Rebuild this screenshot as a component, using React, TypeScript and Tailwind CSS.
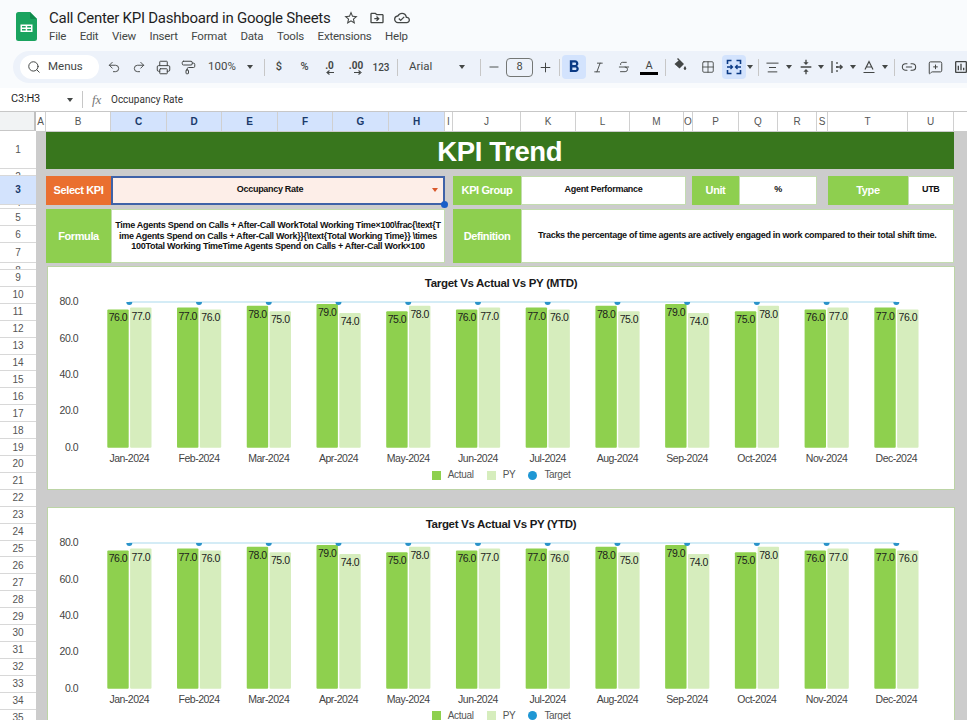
import React from 'react';
import {
  Search,
  Undo2,
  Redo2,
  Printer,
  PaintRoller,
  Minus,
  Plus,
  Italic,
  Strikethrough,
  Grid2x2,
  AlignCenter,
  Link2,
  MessageSquarePlus,
} from 'lucide-react';
import {
  MdStarBorder,
  MdOutlineDriveFileMove,
  MdOutlineCloudDone,
  MdFormatBold,
  MdVerticalAlignCenter,
  MdOutlineInsertChart,
} from 'react-icons/md';

const menus = ['File', 'Edit', 'View', 'Insert', 'Format', 'Data', 'Tools', 'Extensions', 'Help'];

const columns: [string, string, boolean][] = [
  ['A', 'w-[10px]', false],
  ['B', 'w-[65px]', false],
  ['C', 'w-[56px]', true],
  ['D', 'w-[55px]', true],
  ['E', 'w-[56px]', true],
  ['F', 'w-[55px]', true],
  ['G', 'w-[56px]', true],
  ['H', 'w-[56px]', true],
  ['I', 'w-[8px]', false],
  ['J', 'w-[68px]', false],
  ['K', 'w-[55px]', false],
  ['L', 'w-[54px]', false],
  ['M', 'w-[54px]', false],
  ['O', 'w-[9px]', false],
  ['P', 'w-[46px]', false],
  ['Q', 'w-[39px]', false],
  ['R', 'w-[39px]', false],
  ['S', 'w-[11px]', false],
  ['T', 'w-[80px]', false],
  ['U', 'w-[46px]', false],
];

const topRows: [number, string][] = [
  [1, 'h-[37.5px] items-center'],
  [2, 'h-[7px] items-start pt-[3px] leading-[10px]'],
  [3, 'h-[29px] items-center'],
  [4, 'h-[4.5px] items-end leading-[10px]'],
  [5, 'h-[17px] items-center'],
  [6, 'h-[17px] items-center'],
  [7, 'h-[20px] items-center'],
  [8, 'h-[7px] items-start pt-[3px] leading-[10px]'],
];
const restRows = Array.from({ length: 27 }, (_, i) => i + 9);

const months = ['Jan', 'Feb', 'Mar', 'Apr', 'May', 'Jun', 'Jul', 'Aug', 'Sep', 'Oct', 'Nov', 'Dec'];
const actual = [76, 77, 78, 79, 75, 76, 77, 78, 79, 75, 76, 77];
const py = [77, 76, 75, 74, 78, 77, 76, 75, 74, 78, 77, 76];

const Caret = ({ className = '' }: { className?: string }) => (
  <div className={`w-0 h-0 shrink-0 border-x-[3.5px] border-t-[4px] border-x-transparent border-t-[#444746] ${className}`} />
);

const Sep = ({ className = '' }: { className?: string }) => (
  <div className={`w-px h-[17px] bg-[#c7c7c7] shrink-0 ${className}`} />
);

const Tool = ({ children, className = 'w-[25px]' }: { children: React.ReactNode; className?: string }) => (
  <div className={`h-[24px] shrink-0 flex items-center justify-center text-[#444746] ${className}`}>{children}</div>
);

const Decimal = ({ label, right }: { label: string; right?: boolean }) => (
  <div className="relative flex flex-col items-center text-[10px] font-bold leading-[10px] text-[#444746] -mt-[3px]">
    {label}
    <svg width="9" height="5" viewBox="0 0 9 5" className="absolute -bottom-[4px] right-0">
      {right ? (
        <path d="M0 2.5h6M4.5 0.5L7 2.5L4.5 4.5" stroke="#444746" strokeWidth="1.1" fill="none" />
      ) : (
        <path d="M9 2.5H2M4.5 0.5L2 2.5L4.5 4.5" stroke="#444746" strokeWidth="1.1" fill="none" />
      )}
    </svg>
  </div>
);

const Toolbar = () => (
  <div className="ml-[13px] w-[954px] h-[32px] rounded-l-full bg-[#edf2fa] flex items-center pl-[7px] overflow-hidden font-[Roboto,sans-serif]">
    <div className="w-[79px] h-[24px] rounded-full bg-white flex items-center shrink-0 text-[#444746]">
      <Search size={14} strokeWidth={1.7} className="ml-[7px]" />
      <span className="ml-[7px] text-[11.5px]">Menus</span>
    </div>
    <Tool className="w-[25px] ml-[2px]"><Undo2 size={14} strokeWidth={1.6} /></Tool>
    <Tool><Redo2 size={14} strokeWidth={1.6} /></Tool>
    <Tool><Printer size={15} strokeWidth={1.6} /></Tool>
    <Tool className="w-[24px]"><PaintRoller size={15} strokeWidth={1.6} /></Tool>
    <Tool className="w-[58px] !justify-start pl-[8px] gap-[11px] text-[11.5px]">100%<Caret /></Tool>
    <Sep className="ml-[6px]" />
    <Tool className="w-[26px] ml-[1px] text-[11px] font-medium">$</Tool>
    <Tool className="w-[25px] text-[11px] font-medium">%</Tool>
    <Tool className="w-[25px]"><Decimal label=".0" /></Tool>
    <Tool className="w-[28px]"><Decimal label=".00" right /></Tool>
    <Tool className="w-[22px] text-[10px] font-medium">123</Tool>
    <Sep className="ml-[5px]" />
    <Tool className="w-[82px] !justify-start pl-[11px] gap-[27px] text-[11.5px]">Arial<Caret /></Tool>
    <Sep />
    <Tool className="w-[24px] ml-[1px]"><Minus size={14} strokeWidth={1.6} /></Tool>
    <div className="w-[27px] h-[19px] rounded-[4px] border border-[#747775] flex items-center justify-center shrink-0 text-[11px] text-[#444746]">8</div>
    <Tool className="w-[25px]"><Plus size={15} strokeWidth={1.6} /></Tool>
    <Sep className="ml-[1px]" />
    <Tool className="w-[24px] ml-[2px] rounded-[4px] bg-[#d3e3fd] !text-[#0b3a85]"><MdFormatBold className="text-[20px]" /></Tool>
    <Tool><Italic size={13} strokeWidth={1.7} /></Tool>
    <Tool><Strikethrough size={14} strokeWidth={1.6} /></Tool>
    <Tool className="w-[26px]">
      <div className="flex flex-col items-center">
        <span className="text-[11px] leading-[11px]">A</span>
        <div className="w-[18px] h-[3px] bg-black mt-[1px]" />
      </div>
    </Tool>
    <Sep className="ml-[3px]" />
    <Tool className="w-[28px]">
      <svg width="14" height="14" viewBox="0 0 14 14" className="-mt-[4px]">
        <path d="M4 1L5 0L11 6L6.5 10.5L1.5 6L5.6 2.6Z" fill="#444746" />
        <path d="M12 8C12.8 9.2 13.3 9.9 13.3 10.6A1.3 1.3 0 0 1 10.7 10.6C10.7 9.9 11.2 9.2 12 8Z" fill="#444746" />
      </svg>
    </Tool>
    <Tool className="w-[28px]"><Grid2x2 size={14} strokeWidth={1.5} /></Tool>
    <Tool className="w-[24px] rounded-[4px] bg-[#d3e3fd]">
      <svg width="16" height="16" viewBox="0 0 16 16" fill="none" stroke="#0b3a85" strokeWidth="1.6">
        <path d="M5.5 1.5H1.5V5M1.5 11V14.5H5.5M10.5 1.5H14.5V5M14.5 11V14.5H10.5" />
        <path d="M1 8H6M4.5 6L6.5 8L4.5 10M15 8H10M11.5 6L9.5 8L11.5 10" strokeWidth="1.3" />
      </svg>
    </Tool>
    <Tool className="w-[8px]"><Caret /></Tool>
    <Sep className="ml-[4px]" />
    <Tool className="w-[26px]"><AlignCenter size={15} strokeWidth={1.6} /></Tool>
    <Tool className="w-[8px]"><Caret /></Tool>
    <Tool className="w-[23px] ml-[1px]"><MdVerticalAlignCenter className="text-[16px]" /></Tool>
    <Tool className="w-[8px]"><Caret /></Tool>
    <Tool className="w-[24px]">
      <svg width="14" height="14" viewBox="0 0 14 14" fill="none" stroke="#444746" strokeWidth="1.3">
        <path d="M2 1v12M7 2v2M7 6v2M7 10v2M6 7h6M10 5l2.2 2L10 9" />
      </svg>
    </Tool>
    <Tool className="w-[8px]"><Caret /></Tool>
    <Tool className="w-[24px]">
      <svg width="14" height="14" viewBox="0 0 14 14" fill="none" stroke="#444746" strokeWidth="1.2">
        <path d="M3 9.5L7 1.5L11 9.5M4.5 7h5M1.5 12.5h11" />
      </svg>
    </Tool>
    <Tool className="w-[8px]"><Caret /></Tool>
    <Sep className="ml-[5px]" />
    <Tool className="w-[28px]"><Link2 size={16} strokeWidth={1.6} /></Tool>
    <Tool><MessageSquarePlus size={15} strokeWidth={1.6} /></Tool>
    <Tool><MdOutlineInsertChart className="text-[16px]" /></Tool>
  </div>
);

const Label = ({ className, children }: { className: string; children: React.ReactNode }) => (
  <div className={`shrink-0 h-full flex items-center justify-center text-white font-bold text-[11px] tracking-[-0.4px] ${className}`}>
    {children}
  </div>
);

const Value = ({ className, children }: { className: string; children: React.ReactNode }) => (
  <div className={`shrink-0 h-full bg-white border border-[#c3dcb0] flex items-center justify-center text-center text-[9px] tracking-[-0.3px] font-bold text-[#111] ${className}`}>
    {children}
  </div>
);

const BAR_Y0 = 181.7;
const SCALE = 1.82;
const barTop = (v: number) => BAR_Y0 - v * SCALE;

const Plot = () => (
  <svg width="907" height="200" viewBox="0 0 907 200" className="absolute -left-px -top-px tracking-[-0.5px]">
    {[0, 20, 40, 60, 80].map((v) => (
      <text key={v} x="31" y={barTop(v) + 3} textAnchor="end" className="text-[10.5px] fill-[#444]">
        {v}.0
      </text>
    ))}
    {months.map((m, i) => {
      const x = 60.3 + i * 69.73;
      return (
        <g key={m}>
          <rect x={x} y={barTop(actual[i])} width="21.4" height={actual[i] * SCALE} rx="1" fill="#8ed04e" />
          <rect x={x + 22.8} y={barTop(py[i])} width="21.4" height={py[i] * SCALE} rx="1" fill="#d6edbd" />
          <text x={x + 10.7} y={barTop(actual[i]) + 12} textAnchor="middle" className="text-[10.5px] fill-[#1c1c1c]">
            {actual[i]}.0
          </text>
          <text x={x + 33.5} y={barTop(py[i]) + 12} textAnchor="middle" className="text-[10.5px] fill-[#1c1c1c]">
            {py[i]}.0
          </text>
          <text x={x + 22} y="195.5" textAnchor="middle" className="text-[10.5px] fill-[#444]">
            {m}-2024
          </text>
        </g>
      );
    })}
    <path d="M82.3 36H849.3" stroke="#a9d9ee" strokeWidth="1.2" />
    {months.map((m, i) => {
      const cx = 82.3 + i * 69.73;
      return <path key={m} d={`M${cx - 3} 36a3 3 0 0 0 6 0z`} fill="#2a93c9" />;
    })}
  </svg>
);

const Chart = ({ title, className = '' }: { title: string; className?: string }) => (
  <div className={`relative ml-px w-[908px] h-[224px] shrink-0 bg-white border border-[#bcd4a6] flex flex-col items-center ${className}`}>
    <div className="relative z-10 mt-[8px] text-[11.5px] tracking-[-0.3px] leading-[16px] font-bold text-[#1a1a1a]">{title}</div>
    <Plot />
    <div className="absolute left-0 right-0 top-[202px] flex items-center justify-center text-[10px] tracking-[-0.3px] leading-[12px] text-[#555]">
      <div className="w-[9px] h-[9px] bg-[#8ed04e]" />
      <span className="ml-[7px]">Actual</span>
      <div className="w-[9px] h-[9px] bg-[#d6edbd] ml-[13px]" />
      <span className="ml-[7px]">PY</span>
      <div className="w-[9px] h-[9px] rounded-full bg-[#1f97d4] ml-[13px]" />
      <span className="ml-[7px]">Target</span>
    </div>
  </div>
);

const App = () => {
  return (
    <div className="w-[967px] h-[720px] overflow-hidden bg-white font-['Liberation_Sans',Arial,sans-serif]">
      {/* docs header */}
      <header className="h-[88px] bg-[#f9fbfd] flex flex-col">
        <div className="h-[51px] flex">
          <svg width="22" height="29" viewBox="0 0 22 29" className="ml-[16px] mt-[12px] shrink-0">
            <path d="M2.5 0H14L21 7V26.5A2.5 2.5 0 0 1 18.5 29H2.5A2.5 2.5 0 0 1 0 26.5V2.5A2.5 2.5 0 0 1 2.5 0Z" fill="#1aa35f" />
            <path d="M14 0L21 7H15.5A1.5 1.5 0 0 1 14 5.5Z" fill="#0f8a4c" />
            <path d="M4.5 12.5H16.5V20H4.5Z M6 14V15.5H9.7V14Z M11.2 14V15.5H15V14Z M6 17V18.5H9.7V17Z M11.2 17V18.5H15V17Z" fill="#fff" fillRule="evenodd" />
          </svg>
          <div className="ml-[11px] font-[Roboto,sans-serif]">
            <div className="flex items-center h-[24px] mt-[6px]">
              <span className="text-[15px] tracking-[-0.25px] leading-[24px] text-[#1f1f1f] whitespace-nowrap w-[294px]">Call Center KPI Dashboard in Google Sheets</span>
              <MdStarBorder className="text-[16px] text-[#444746]" />
              <MdOutlineDriveFileMove className="text-[16px] text-[#444746] ml-[10px]" />
              <MdOutlineCloudDone className="text-[16px] text-[#444746] ml-[9px]" />
            </div>
            <nav className="flex gap-[13.5px] -mt-px text-[11.5px] tracking-[-0.2px] leading-[14px] text-[#444746]">
              {menus.map((m) => (
                <span key={m}>{m}</span>
              ))}
            </nav>
          </div>
        </div>
        <Toolbar />
      </header>

      {/* formula bar */}
      <div className="h-[24px] bg-white flex items-center border-b border-[#c7c7c7] text-[#444746] font-[Roboto,sans-serif]">
        <span className="ml-[11px] w-[56px] text-[11px] tracking-[-0.2px] text-[#1f1f1f]">C3:H3</span>
        <Caret />
        <Sep className="ml-[9px]" />
        <span className="ml-[9px] w-[19px] font-['Liberation_Serif',serif] italic text-[13px] text-[#777]">fx</span>
        <span className="text-[10px] text-[#333]">Occupancy Rate</span>
      </div>

      {/* column headers */}
      <div className="h-[19px] flex text-[10px] text-[#555]">
        <div className="w-[36px] shrink-0 bg-[#f1f3f4] border-r-2 border-[#c0c0c0] border-b border-b-[#c7c7c7]" />
        {columns.map(([name, w, selected]) => (
          <div
            key={name}
            className={`${w} shrink-0 flex items-center justify-center border-r border-[#d0d0d0] ${
              selected ? 'bg-[#d3e3fd] font-bold text-[#1a3a6b]' : 'bg-white'
            }`}
          >
            {name}
          </div>
        ))}
        <div className="flex-1 bg-white" />
      </div>

      <div className="flex">
        {/* row headers */}
        <div className="w-[36px] shrink-0 text-[10px] text-[#555] bg-white">
          {topRows.map(([n, h]) => (
            <div
              key={n}
              className={`${h} overflow-hidden flex justify-center border-b border-[#d8d8d8] ${
                n === 3 ? 'bg-[#d3e3fd] text-[#1a3a6b] font-bold' : ''
              }`}
            >
              {n}
            </div>
          ))}
          {restRows.map((n) => (
            <div key={n} className="h-[16.92px] flex items-center justify-center border-b border-[#d8d8d8]">
              {n}
            </div>
          ))}
        </div>

        {/* sheet */}
        <main className="flex-1 h-[589px] overflow-hidden bg-[#cccccc] pl-[10px] pt-px flex flex-col">
          <div className="w-[907.5px] h-[36.5px] shrink-0 bg-[#38761d] flex items-center justify-center pt-[2px] text-white font-bold text-[27.5px] tracking-[-0.4px]">
            KPI Trend
          </div>

          <div className="h-[29px] mt-[7px] shrink-0 flex">
            <Label className="w-[65px] bg-[#ea6f2f]">Select KPI</Label>
            <div className="relative w-[334px] shrink-0 h-full bg-[#fdeee8] border-2 border-[#3f62a8] pr-[16px] flex items-center justify-center text-[9px] tracking-[-0.3px] font-bold text-[#111]">
              Occupancy Rate
              <Caret className="absolute right-[5px] top-[10px] !border-t-[#d9582b]" />
              <div className="absolute -right-[5px] -bottom-[5px] w-[7px] h-[7px] rounded-full bg-[#1a5fc8]" />
            </div>
            <Label className="w-[68px] ml-[8px] bg-[#8ecf4f]">KPI Group</Label>
            <Value className="w-[165px]">Agent Performance</Value>
            <Label className="w-[47px] ml-[6px] bg-[#8ecf4f]">Unit</Label>
            <Value className="w-[78px]">%</Value>
            <Label className="w-[80px] ml-[11px] bg-[#8ecf4f]">Type</Label>
            <Value className="w-[45.5px]">UTB</Value>
          </div>

          <div className="h-[54px] mt-[4.5px] shrink-0 flex">
            <Label className="w-[65px] bg-[#8ecf4f]">Formula</Label>
            <Value className="w-[334px] leading-[10.5px] whitespace-nowrap">
              <div>
                Time Agents Spend on Calls + After-Call WorkTotal Working Time×100\frac{'{'}\text{'{'}T
                <br />
                ime Agents Spend on Calls + After-Call Work{'}}{'}\text{'{'}Total Working Time{'}}'} \times
                <br />
                100Total Working TimeTime Agents Spend on Calls + After-Call Work×100
              </div>
            </Value>
            <Label className="w-[68px] ml-[8px] bg-[#8ecf4f]">Definition</Label>
            <Value className="w-[432.5px]">
              Tracks the percentage of time agents are actively engaged in work compared to their total shift time.
            </Value>
          </div>

          <Chart title="Target Vs Actual Vs PY (MTD)" className="mt-[3px]" />
          <Chart title="Target Vs Actual Vs PY (YTD)" className="mt-[16.5px]" />
        </main>
      </div>
    </div>
  );
};

export default App;
